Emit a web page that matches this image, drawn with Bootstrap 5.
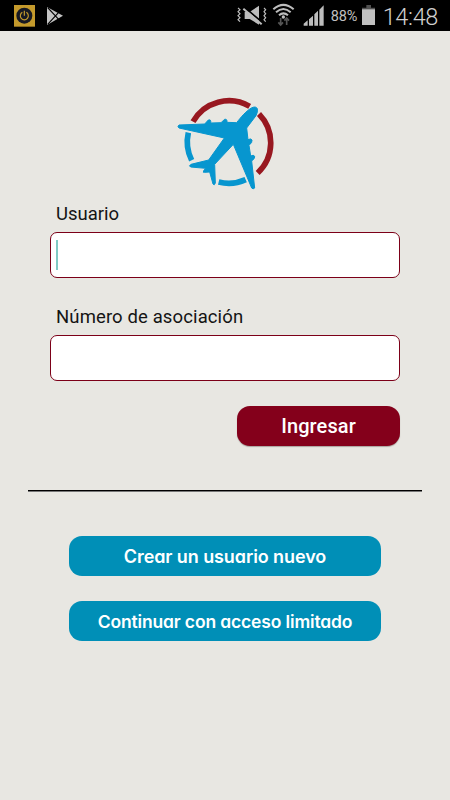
<!DOCTYPE html>
<html lang="es">
<head>
<meta charset="utf-8">
<meta name="viewport" content="width=device-width, initial-scale=1">
<title>Ingresar</title>
<link href="https://cdn.jsdelivr.net/npm/bootstrap@5.3.0/dist/css/bootstrap.min.css" rel="stylesheet">
<style>
body{background:#e8e7e2;font-family:Roboto,sans-serif;height:800px;overflow:hidden;color:#141414}
.status-bar{height:31px;background:#000;color:#c0c0c0}
.status-bar svg{display:block;flex:none}
.pct{font-size:14.5px;line-height:31px;letter-spacing:-.1px;margin-left:7px;width:31px;padding-top:2px}
.clock{font-size:23.5px;line-height:34px;font-weight:300;letter-spacing:-.35px;margin:2px 12px 0 8px;white-space:nowrap;color:#cfcfcf}
.logo{display:block;margin:59px 0 0 170px}
.login-form{padding:7px 50px 0}
.field-label{font-size:18.5px;line-height:24px;padding-left:6px;display:block}
.label-second{margin-top:27px;letter-spacing:.12px}
.form-control.field{height:46px;border:1.5px solid #7c0018;border-radius:7px;box-shadow:none;background:#fff}
.field-wrap{height:46px;margin-top:6px}
.caret{width:2px;height:30px;left:6px;top:8px;background:#80cbc4}
.submit-row{margin-top:25px}
.btn-enter{width:163px;height:40px;border-radius:13px;background:#84001b;color:#fff;font-size:20px;font-weight:500;letter-spacing:.1px;padding:0;border:0;box-shadow:0 1px 1px #aaa5a0}
.rule{height:2px;margin:44px 28px 0;background:linear-gradient(#000 50%,#777 50%);width:394px}
.alt-actions{gap:25px;margin-top:44px}
.btn-alt{width:312px;height:40px;border-radius:13px;background:#008fb7;color:#fff;border:0;padding:1px 0 0;font-family:Inter,sans-serif;font-weight:600;font-feature-settings:"cv11";white-space:nowrap}
.btn-new{font-size:18px;letter-spacing:-.09px}
.btn-limited{font-size:17.5px;letter-spacing:-.15px;padding-top:3px}
.btn-enter:hover{background:#84001b;color:#fff}
.btn-alt:hover{background:#008fb7;color:#fff}
</style>
</head>
<body>
<header class="status-bar d-flex align-items-center">
  <svg width="110" height="31" viewBox="0 0 330 93">
    <rect x="42" y="15" width="63" height="65" fill="#c49a2c"/>
    <circle cx="73" cy="47" r="24" fill="#171923"/>
    <path d="M67 37A12 12 0 1 0 79 37M73 32v15" fill="none" stroke="#c49a2c" stroke-width="3.5"/>
    <path d="M141 21L189 47L141 75Z" fill="#c4c4c4"/>
    <path d="M143 23L176 58M143 73L176 37" stroke="#000" stroke-width="3.5"/>
  </svg>
  <svg class="ms-auto" width="94" height="31" viewBox="0 0 282 93">
    <g fill="none" stroke="#bdbdbd">
      <path d="M24 24l6 5-6 6 6 6-6 6 6 6-6 6 6 6M102 24l5 5-5 6 5 6-5 6 5 6-5 6 5 6" stroke-width="3.5"/>
      <path d="M44 36h15L87 17V74L59 57H44Z" fill="#bdbdbd" stroke="none"/>
      <path d="M46 24L99 69" stroke="#000" stroke-width="5"/>
      <path d="M40 26L95 73" stroke-width="6"/>
      <path d="M130 28Q160 1 191 28M138 37Q160 17 182 37M147 46Q160 34 174 46" stroke-width="6"/>
      <circle cx="160" cy="51" r="5" fill="#bdbdbd" stroke="none"/>
      <path d="M152 54v20m-7-7l7 8 7-8M170 75V55m-7 7l7-8 7 8" stroke="#555" stroke-width="5"/>
    </g>
    <path d="M221 77V71l12-10V77ZM237 77V58l12-11V77ZM253 77V43l11-11V77ZM268 77V29l13-13V77Z" fill="#bdbdbd"/>
  </svg>
  <span class="pct">88%</span>
  <svg width="13" height="31" viewBox="0 0 39 93"><path d="M13 15h14v8h12V30H0V23h13Z" fill="#505050"/><path d="M0 28h39v47H0Z" fill="#c0c0c0"/></svg>
  <span class="clock">14:48</span>
</header>
<main>
  <svg class="logo" width="110" height="105" viewBox="0 0 330 315" aria-label="Avión">
    <g fill="none" stroke-width="17">
      <path d="M69 95A124 124 0 0 1 239 49M267 72A124 124 0 0 1 263 249" stroke="#981820"/>
      <path d="M55 128A124 124 0 0 0 65 211M146 276A124 124 0 0 0 227 269" stroke="#0796cf"/>
    </g>
    <path fill="#0796cf" stroke="#0796cf" stroke-width="3" stroke-linejoin="round" d="M200 98C212 82 230 61 246 53Q258 48 262 56Q264 66 258 77L230 114L234 149Q243 144 246 150Q248 157 237 166L242 198Q251 193 254 199Q256 205 245 213L254 294Q249 299 245 294L190 163L134 223L136 279Q133 288 129 282L119 246L104 247Q98 249 101 242L107 235L62 231Q55 228 63 223L116 210L163 144L27 114Q21 110 27 105L104 102L115 90Q124 87 122 99L153 98L164 88Q172 86 171 97Z"/>
  </svg>
  <form class="login-form" onsubmit="return false">
    <label class="field-label" for="user">Usuario</label>
    <div class="field-wrap position-relative">
      <input class="form-control field" id="user" type="text">
      <span class="caret position-absolute"></span>
    </div>
    <label class="field-label label-second" for="assoc">Número de asociación</label>
    <div class="field-wrap"><input class="form-control field" id="assoc" type="text"></div>
    <div class="submit-row d-flex justify-content-end"><button class="btn btn-enter" type="submit">Ingresar</button></div>
  </form>
  <div class="rule"></div>
  <div class="alt-actions d-flex flex-column align-items-center">
    <button class="btn btn-alt btn-new" type="button">Crear un usuario nuevo</button>
    <button class="btn btn-alt btn-limited" type="button">Continuar con acceso limitado</button>
  </div>
</main>
<script src="https://cdn.jsdelivr.net/npm/bootstrap@5.3.0/dist/js/bootstrap.bundle.min.js"></script>
</body>
</html>
